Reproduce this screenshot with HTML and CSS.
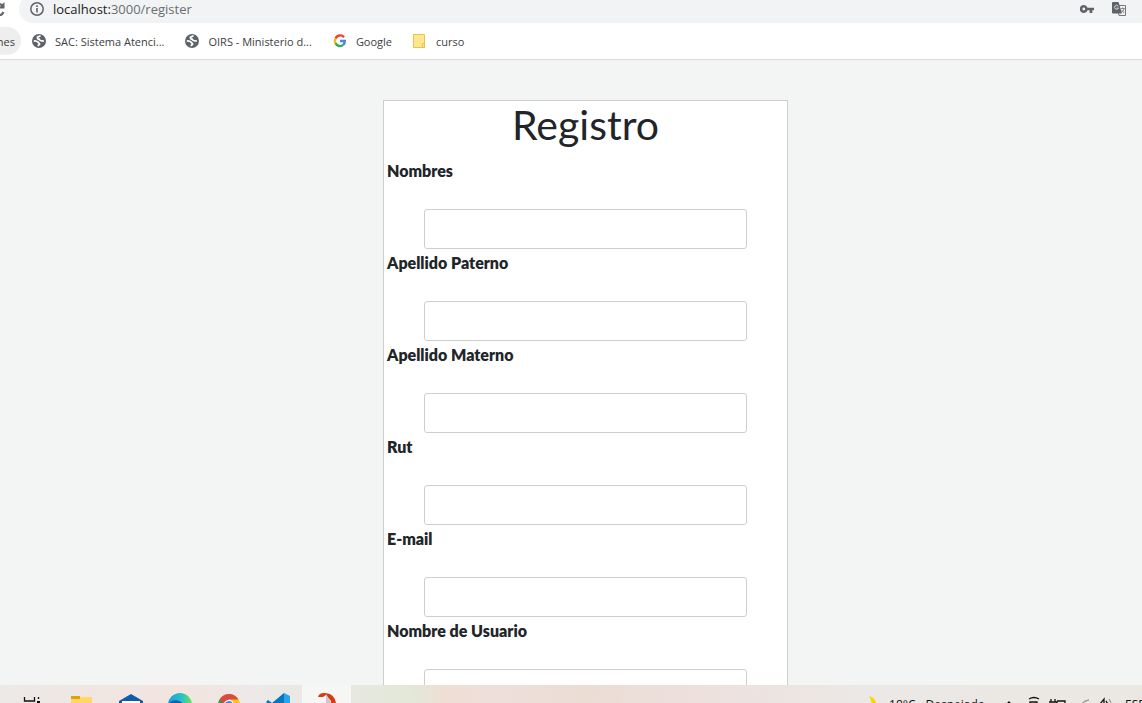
FILE: index.html
```html
<!DOCTYPE html>
<html lang="es">
<head>
<meta charset="utf-8">
<meta name="viewport" content="width=device-width, initial-scale=1">
<title>Registro</title>
<link rel="stylesheet" href="styles.css">
</head>
<body>
<svg class="defs" aria-hidden="true">
  <symbol id="globe" viewBox="0 0 14 14">
    <circle cx="7" cy="7" r="7" fill="#5f6368"/>
    <path d="M8.500 1.800C7 2 7.200 3 5.500 3.200 5.200 4.800 6.200 5.200 7.200 5.200c.4 1.300 1.500 1.800 4.800 1.800M1.800 6.800c1.700.1 3.200 0 4.200 1.200.2 1 1.500.9 1.600 2-.2.800-1 1-1.600 2" fill="none" stroke="#fff" stroke-width="1.700"/>
  </symbol>
</svg>
<header class="browser">
  <div class="toolbar">
    <button class="reload" aria-label="Recargar"><svg width="14" height="14" viewBox="0 0 14 14"><path d="M12 4.500A6 6 0 1 0 12.500 10" fill="none" stroke="#5f6368" stroke-width="2"/><path d="M13.500 0v6.500H7z" fill="#5f6368"/></svg></button>
    <div class="address">
      <svg width="14" height="14" viewBox="0 0 14 14"><circle cx="7" cy="7" r="6.200" fill="none" stroke="#5f6368" stroke-width="1.500"/><path d="M6.200 6h1.600v4.500H6.200zM6.200 3.300h1.600v1.600H6.200z" fill="#5f6368"/></svg>
      <span class="url"><b>localhost:</b>3000/register</span>
      <button class="tool" aria-label="Contraseñas"><svg width="14" height="14" viewBox="0 0 14 14"><path fill-rule="evenodd" d="M3.800 3a4 4 0 1 0 3.800 5.300h2V11h2.700V8.300H14V5.700H7.600A4 4 0 0 0 3.800 3zm0 2.600a1.400 1.400 0 1 1 0 2.800 1.400 1.400 0 0 1 0-2.800z" fill="#5f6368"/></svg></button>
      <button class="tool" aria-label="Traducir"><svg width="14" height="14" viewBox="0 0 14 14"><path d="M5 3.500h8.500v10H7z" fill="#f1f3f4" stroke="#74777b"/><path d="M0 1q0-1 1-1h5.500l3.500 11.500H1q-1 0-1-1z" fill="#5f6368"/><path d="M6.300 4.200A2 2 0 1 0 6.500 6H4.700" fill="none" stroke="#d8dadc"/><path d="M8.800 6.500h4M10.800 5.500v1M12 6.700c-.5 2-1.500 3-2.500 3.800M9.700 8l2.500 3" fill="none" stroke="#85888c"/></svg></button>
    </div>
  </div>
  <nav class="bookmarks">
    <a class="chip" href="#">nes</a>
    <a class="mark" href="#"><svg width="14" height="14"><use href="#globe"/></svg>SAC: Sistema Atenci...</a>
    <a class="mark" href="#"><svg width="14" height="14"><use href="#globe"/></svg>OIRS - Ministerio d...</a>
    <a class="mark" href="#"><svg width="14" height="14" viewBox="0 0 14 14"><g fill="none" stroke-width="2.400"><path d="M11 3.200A5 5 0 0 0 2.500 4.700" stroke="#ea4335"/><path d="M2.500 4.700a5 5 0 0 0 0 4.600" stroke="#fbbc05"/><path d="M2.500 9.300a5 5 0 0 0 7.700 1.600" stroke="#34a853"/><path d="M7 7h4.800a5 5 0 0 1-1.600 3.900" stroke="#4285f4"/></g></svg>Google</a>
    <a class="mark" href="#"><svg width="14" height="14" viewBox="0 0 14 14"><path d="M.5.5h11v13H.5z" fill="#ffe68f" stroke="#e9c545"/><path d="M9.500 9.500h2v4h-2z" fill="#ffe68f" stroke="#e9c545"/></svg>curso</a>
  </nav>
</header>
<main class="page">
  <form class="card">
    <h1>Registro</h1>
    <label for="nombres">Nombres</label><input id="nombres" type="text">
    <label for="paterno">Apellido Paterno</label><input id="paterno" type="text">
    <label for="materno">Apellido Materno</label><input id="materno" type="text">
    <label for="rut">Rut</label><input id="rut" type="text">
    <label for="email">E-mail</label><input id="email" type="email">
    <label for="usuario">Nombre de Usuario</label><input id="usuario" type="text">
  </form>
</main>
<footer class="taskbar">
  <div class="apps">
    <button class="app" aria-label="Vista de tareas"><svg width="24" height="24" viewBox="0 0 24 24"><path d="M3.500 4v4h10V4M3.500 16v-4.500h10V16M17.500 4v2M17.500 9v8" fill="none" stroke="#111" stroke-width="1.300"/><path d="M16 8h3v3h-3z" fill="#111"/></svg></button>
    <button class="app" aria-label="Explorador"><svg width="24" height="24" viewBox="0 0 24 24"><path d="M1 3h9l1 1h11v16H1z" fill="#ffd766"/><path d="M1 3h9v3H1z" fill="#e0a010"/></svg></button>
    <button class="app" aria-label="Correo"><svg width="24" height="24" viewBox="0 0 24 24"><path d="M0 8l12-7 12 7v12H0z" fill="#0f5cac"/><path d="M3 8h18v3l-9 6-9-6z" fill="#fff"/></svg></button>
    <button class="app" aria-label="Edge"><svg width="24" height="24" viewBox="0 0 24 24"><defs><linearGradient id="edge"><stop stop-color="#1a9fe0"/><stop offset=".6" stop-color="#2bc3c5"/><stop offset="1" stop-color="#6be34f"/></linearGradient></defs><circle cx="12" cy="12" r="12" fill="url(#edge)"/><path d="M0 12c2-6 12-6 15-1-6-2-8 3-5 9H2z" fill="#0c62b5"/></svg></button>
    <button class="app" aria-label="Chrome"><svg width="24" height="24" viewBox="0 0 24 24"><circle cx="12" cy="12" r="11" fill="#fbc116"/><path d="M12 12L2.500 6.500A11 11 0 0 0 12 23z" fill="#2b9e4b"/><path d="M2.500 6.500a11 11 0 0 1 19 0H12L8 12z" fill="#d94b41"/><circle cx="12" cy="12" r="5.200" fill="#fff"/><circle cx="12" cy="12" r="4" fill="#4285f4"/></svg></button>
    <button class="app" aria-label="Visual Studio Code"><svg width="24" height="24" viewBox="0 0 24 24"><path d="M18 0v24L0 9l2-2 4 3z" fill="#0a74bd"/><path d="M18 0l6 3v18l-6 3z" fill="#24a5ee"/></svg></button>
    <button class="app active" aria-label="Recortes"><svg width="24" height="24" viewBox="0 0 24 24"><path d="M3 4q1-4 6-4c8 0 12 5 12 12l-5 7V8L11 2 8 4z" fill="#d83b12"/><path d="M11 1v12l6 5V11z" fill="#c9c9c9"/></svg></button>
  </div>
  <div class="tray">
    <svg width="14" height="18" viewBox="0 0 14 18"><path d="M1 0c7 2 9 8 6 17H1C5 12 4 5 1 0z" fill="#f7d800"/></svg>
    <div class="weather"><span>18°C</span><span>Despejado</span></div>
    <svg class="status" width="110" height="18" viewBox="0 0 110 18"><g fill="none" stroke="#111" stroke-width="1.300"><path d="M1 11l5-5 5 5"/><path d="M26 3q5-3 10 0M27 14V6h7v8M36 7v6"/><path d="M48 3v3M52 3v3M46 6h8v5M54 5h8v8"/><path d="M77 12q2-7 9-8" stroke="#999"/><path d="M94 8h3l4-5v12l-4-4h-3zM103 5q3 4 0 8"/><path d="M106 3q4 6 0 12" stroke="#999"/></g></svg>
    <span class="lang">ESP</span>
  </div>
</footer>
</body>
</html>
```

FILE: styles.css
```css
* { box-sizing: border-box; }
body {
  margin: 0;
  height: 100vh;
  display: flex;
  flex-direction: column;
  overflow: hidden;
  background: #f3f5f4;
  color: #212529;
  font-family: Lato, sans-serif;
  font-size: 16px;
}
button { border: 0; padding: 0; background: none; }
svg { display: block; flex: none; }
.defs { position: absolute; width: 0; height: 0; }
.browser {
  flex: none;
  background: #fff;
  border-bottom: 1px solid #dadcdc;
  font-family: "Open Sans", sans-serif;
  color: #3c4043;
}
.toolbar { display: flex; height: 23px; overflow: hidden; }
.reload { width: 19px; display: flex; justify-content: flex-end; padding: 2px 14px 0 0; }
.address {
  flex: 1;
  height: 28px;
  margin-top: -5px;
  padding: 0 16px 0 11px;
  display: flex;
  align-items: center;
  border-radius: 14px 0 0 14px;
  background: #f1f3f4;
}
.url { flex: 1; margin-left: 9px; font-size: 13px; color: #6a6e72; }
.url b { font-weight: 400; color: #202124; }
.tool { margin-left: 18px; }
.bookmarks { height: 36px; display: flex; align-items: center; font-size: 11px; white-space: nowrap; }
.bookmarks a { color: inherit; text-decoration: none; }
.chip {
  width: 21px;
  height: 28px;
  margin-right: 11px;
  padding-right: 6px;
  display: flex;
  align-items: center;
  justify-content: flex-end;
  border-radius: 0 14px 14px 0;
  background: #eee;
}
.mark { display: flex; align-items: center; gap: 9px; margin-right: 21px; }
.page {
  flex: 1;
  min-height: 0;
  overflow: hidden;
  padding: 40px 0 0 29px;
}
.card {
  width: 100%;
  max-width: 405px;
  margin: 0 auto;
  padding-bottom: 40px;
  border: 1px solid #cdcfcf;
  background: #fff;
}
h1 {
  margin: 0 0 10px;
  font-size: 41px;
  font-weight: 400;
  line-height: 48px;
  text-align: center;
}
label { display: block; padding-left: 3px; margin-bottom: 26px; line-height: 24px; font-weight: 800; }
.card input {
  display: block;
  width: 80%;
  height: 40px;
  margin: 0 auto 2px;
  padding: 0 8px;
  border: 1px solid #cdcfcf;
  border-radius: 3px;
  font: inherit;
}
.taskbar {
  flex: none;
  height: 18px;
  overflow: hidden;
  display: flex;
  justify-content: space-between;
  background: linear-gradient(90deg, #ece9e7 0, #f3e4df 16%, #ece9e8 22%, #e9e8e3 28%, #e3e8d9 36%, #efded3 39%, #eedfdb 43%, #ebddd4 51%, #eddfdc 60%, #ece8e5 75%, #ebe8e4 100%);
}
.apps { display: flex; margin-left: 8px; }
.app { width: 49px; height: 40px; display: flex; justify-content: center; padding-top: 8px; }
.active { background: #f6f6f5; }
.tray {
  display: flex;
  align-items: flex-start;
  padding-top: 11px;
  font: 12px/18px "Open Sans", sans-serif;
  color: #111;
  white-space: nowrap;
}
.weather { display: flex; gap: 10px; margin: 0 18px 0 7px; }
.status { margin-right: 12px; }
.lang { width: 17px; }
```
